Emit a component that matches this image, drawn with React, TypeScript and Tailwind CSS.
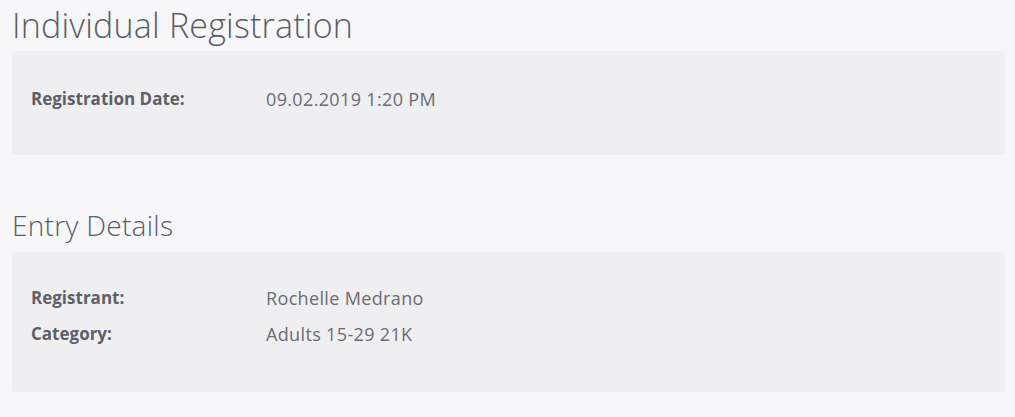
import React from 'react';

interface Row {
  label: string;
  value: string;
}

const InfoCard: React.FC<{ rows: Row[]; className?: string }> = ({ rows, className }) => (
  <div className={`ml-3 mr-[10px] rounded bg-[#efeff1] pl-[19px] ${className ?? ''}`}>
    {rows.map((row) => (
      <div key={row.label} className="flex h-9 items-center">
        <div className="w-[235px] text-[17px] font-bold text-[#5e6068]">{row.label}</div>
        <div className="text-[18px] tracking-[0.35px] text-[#6a6c74]">{row.value}</div>
      </div>
    ))}
  </div>
);

export default function App() {
  return (
    <div
      className="min-h-[417px] w-full bg-[#f7f7f9]"
      style={{ fontFamily: '"Open Sans", "Noto Sans", sans-serif' }}
    >
      <h1 className="px-3 pt-[2px] text-[34px] font-light leading-[46px] tracking-[0.2px] text-[#5b5d66]">
        Individual Registration
      </h1>
      <InfoCard
        className="mt-[3px] pt-[30px] pb-[38px]"
        rows={[{ label: 'Registration Date:', value: '09.02.2019 1:20 PM' }]}
      />
      <h2 className="mt-[50px] px-3 text-[28px] font-light leading-[40px] tracking-[0.3px] text-[#5b5d66]">
        Entry Details
      </h2>
      <InfoCard
        className="mt-[7px] pt-[28px] pb-[40px]"
        rows={[
          { label: 'Registrant:', value: 'Rochelle Medrano' },
          { label: 'Category:', value: 'Adults 15-29 21K' },
        ]}
      />
    </div>
  );
}
